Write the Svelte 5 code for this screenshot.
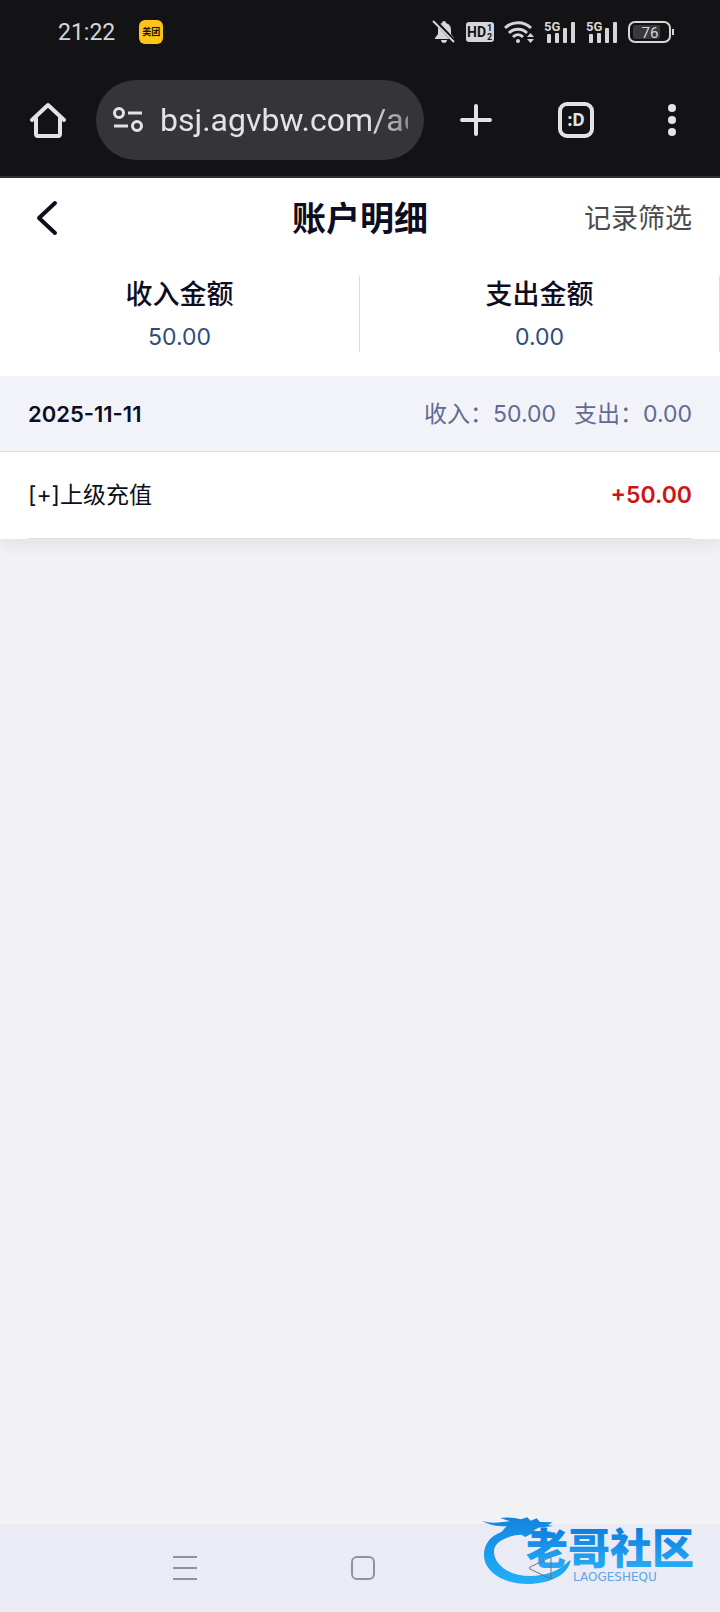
<script lang="ts">
	type Entry = { label: string; amount: string };
	type Day = { date: string; income: string; expense: string; entries: Entry[] };

	let address = $state('bsj.agvbw.com/ac');

	const totals = [
		{ label: '收入金额', value: '50.00' },
		{ label: '支出金额', value: '0.00' }
	];

	const days: Day[] = [
		{
			date: '2025-11-11',
			income: '50.00',
			expense: '0.00',
			entries: [{ label: '[+]上级充值', amount: '+50.00' }]
		}
	];
</script>

{#snippet signal()}
	<svg width="32" height="24" viewBox="0 0 32 24" fill="currentColor">
		<text x="0" y="11" font-size="13" font-weight="700">5G</text>
		<rect x="3" y="14" width="4" height="9" rx="1" />
		<rect x="11" y="13" width="4" height="10" rx="1" />
		<rect x="19" y="8" width="4" height="15" rx="1" />
		<rect x="27" y="2" width="4" height="21" rx="1" />
	</svg>
{/snippet}

<div class="screen">
	<div class="status">
		<time>21:22</time>
		<span class="app-badge">美团</span>
		<div class="indicators">
			<svg width="24" height="24" viewBox="0 0 24 24" fill="currentColor">
				<path d="M12 1a2 2 0 0 1 2 2c3 1 5 3 5 7v4l3 4v1H3v-1l3-4v-4c0-4 1-6 4-7a2 2 0 0 1 2-2zM9 20h6c0 4-6 4-6 0z" />
				<path d="M3 1l20 21" stroke="#131315" stroke-width="4" />
				<path d="M1 1l21 21" stroke="currentColor" stroke-width="2" />
			</svg>
			<svg width="28" height="20" viewBox="0 0 28 20">
				<rect width="28" height="20" rx="3" fill="currentColor" />
				<text x="1" y="15" font-size="14" font-weight="700" fill="#131315">HD</text>
				<text x="21" y="9" font-size="9" font-weight="700" fill="#131315">1</text>
				<text x="21" y="18" font-size="9" font-weight="700" fill="#131315">2</text>
			</svg>
			<svg width="30" height="24" viewBox="0 0 30 24" fill="none" stroke="currentColor" stroke-width="3">
				<path d="M1 8c7-7 19-7 26 0M5 13c5-5 13-5 18 0M9 17c3-3 7-3 10 0" />
				<circle cx="14" cy="21" r="2" fill="currentColor" stroke="none" />
				<path d="M23 17l3.500-4 3.500 4zM23 19l3.500 4 3.500-4z" fill="currentColor" stroke="none" />
			</svg>
			{@render signal()}
			{@render signal()}
			<svg width="46" height="22" viewBox="0 0 46 22">
				<rect x="5" y="4" width="27" height="14" rx="2" fill="#38383a" />
				<rect x="1" y="1" width="41" height="20" rx="6" fill="none" stroke="currentColor" stroke-width="2" />
				<path d="M45 8v6" stroke="currentColor" stroke-width="2" />
				<text x="22" y="17" font-size="15" text-anchor="middle" fill="currentColor">76</text>
			</svg>
		</div>
	</div>

	<nav class="toolbar" aria-label="Browser">
		<button aria-label="Home">
			<svg width="36" height="36" viewBox="0 0 36 36" fill="none" stroke="currentColor" stroke-width="4" stroke-linejoin="round" stroke-linecap="round">
				<path d="M2 18L18 3l16 15M6 16v16q0 2 2 2h20q2 0 2-2V16" />
			</svg>
		</button>
		<label class="address">
			<svg width="30" height="26" viewBox="0 0 30 26" fill="none" stroke="currentColor" stroke-width="3">
				<circle cx="6" cy="6" r="4.500" />
				<path d="M15 6h14M1 19h14" />
				<circle cx="24" cy="19" r="4.500" />
			</svg>
			<input type="text" aria-label="Address" bind:value={address} />
		</label>
		<button aria-label="New tab">
			<svg width="32" height="32" viewBox="0 0 32 32" stroke="currentColor" stroke-width="4" stroke-linecap="round">
				<path d="M2 16h28M16 2v28" />
			</svg>
		</button>
		<button aria-label="Tabs"><span class="tabs">:D</span></button>
		<button aria-label="Menu">
			<svg width="8" height="32" viewBox="0 0 8 32" fill="currentColor">
				<circle cx="4" cy="4" r="4" />
				<circle cx="4" cy="16" r="4" />
				<circle cx="4" cy="28" r="4" />
			</svg>
		</button>
	</nav>

	<header>
		<button class="back" aria-label="返回">
			<svg width="22" height="36" viewBox="0 0 22 36" fill="none" stroke="currentColor" stroke-width="4" stroke-linecap="round" stroke-linejoin="round">
				<path d="M19 3L3 18l16 15" />
			</svg>
		</button>
		<h1>账户明细</h1>
		<button class="filter">记录筛选</button>
	</header>

	<main>
		<dl class="totals">
			{#each totals as total}
				<div>
					<dt>{total.label}</dt>
					<dd>{total.value}</dd>
				</div>
			{/each}
		</dl>

		{#each days as day}
			<section class="day">
				<div class="day-head">
					<h2>{day.date}</h2>
					<p>
						<span>收入：{day.income}</span>
						<span>支出：{day.expense}</span>
					</p>
				</div>
				<ul>
					{#each day.entries as entry}
						<li>
							<span>{entry.label}</span>
							<strong>{entry.amount}</strong>
						</li>
					{/each}
				</ul>
			</section>
		{/each}
	</main>

	<nav class="system" aria-label="System">
		<button aria-label="Recent">
			<svg width="24" height="24" viewBox="0 0 24 24" stroke="currentColor" stroke-width="2">
				<path d="M0 1h24M0 12h24M0 23h24" />
			</svg>
		</button>
		<button aria-label="Home screen">
			<svg width="24" height="24" viewBox="0 0 24 24" fill="none" stroke="currentColor" stroke-width="2">
				<rect x="1" y="1" width="22" height="22" rx="5" />
			</svg>
		</button>
		<button class="return" aria-label="Back">
			<svg width="24" height="24" viewBox="0 0 24 24" fill="none" stroke="currentColor" stroke-width="1">
				<path d="M23 1v22L2 13q-1-1 0-2z" />
			</svg>
		</button>
		<svg class="logo" width="250" height="112" viewBox="0 0 250 112">
			<defs>
				<linearGradient id="body" x1="0" y1="0" x2="0" y2="1">
					<stop offset="0" stop-color="#1284e0" />
					<stop offset="1" stop-color="#22b0fa" />
				</linearGradient>
				<linearGradient id="word" x1="0" y1="0" x2="0" y2="1">
					<stop offset="0.2" stop-color="#0c7de0" />
					<stop offset="1" stop-color="#2cb4fa" />
				</linearGradient>
			</defs>
			<g fill="url(#body)" transform="scale(0.3333)">
				<path
					d="M95 95C60 110 42 130 42 165C42 215 100 252 172 252C240 252 295 225 302 180L296 184C265 215 225 228 180 228C120 228 72 195 72 155C72 130 95 115 135 106L155 104L165 111L185 101L198 108L215 99L240 104L245 95L190 92L205 83L250 78L234 75L248 67L210 66L200 55L182 62L172 52L152 58Q125 50 90 54L120 64L98 66Q60 72 36 62Q70 82 110 78Z"
				/>
			</g>
			<text class="word" x="56" y="64" fill="url(#word)">老哥社区</text>
			<text class="caption" x="103" y="81">LAOGESHEQU</text>
		</svg>
	</nav>
</div>

<style>
	:global(body) {
		margin: 0;
		background: #f2f2f4;
	}

	.screen {
		display: flex;
		flex-direction: column;
		min-height: 100vh;
		font-family: Inter, 'Noto Sans CJK SC', sans-serif;
		color: #0c0d20;
	}

	button {
		display: flex;
		align-items: center;
		justify-content: center;
		padding: 0;
		border: 0;
		background: none;
		color: inherit;
		font: inherit;
	}

	h1,
	h2,
	p,
	dl,
	dd,
	ul {
		margin: 0;
		padding: 0;
	}

	.status {
		display: flex;
		align-items: center;
		height: 64px;
		padding: 0 46px 0 58px;
		background: #131315;
		color: #d6d6d8;
		font-family: Roboto, sans-serif;
	}
	.status time {
		font-size: 23px;
	}
	.app-badge {
		margin-left: 24px;
		width: 24px;
		border-radius: 6px;
		background: #fcc318;
		color: #1c1508;
		font: 700 9px/24px 'Noto Sans CJK SC', sans-serif;
		text-align: center;
	}
	.indicators {
		display: flex;
		align-items: center;
		gap: 10px;
		margin-left: auto;
	}

	.toolbar {
		display: grid;
		grid-template-columns: 96px minmax(0, 1fr) 104px 96px 96px;
		padding: 16px 0;
		border-bottom: 2px solid #303032;
		background: #131315;
		color: #e3e3e5;
	}
	.address {
		display: flex;
		align-items: center;
		gap: 17px;
		height: 80px;
		padding: 0 16px 0 17px;
		box-sizing: border-box;
		border-radius: 40px;
		background: #353537;
	}
	.address svg {
		flex: none;
	}
	.address input {
		flex: 1;
		min-width: 0;
		padding: 0;
		border: 0;
		outline: none;
		background: none;
		color: inherit;
		font: 32px/40px Roboto, sans-serif;
		mask-image: linear-gradient(to right, #000 84%, rgb(0 0 0 / 0.5));
	}
	.tabs {
		width: 28px;
		border: 4px solid;
		border-radius: 9px;
		font: 700 17px/28px 'Noto Sans', sans-serif;
	}

	header {
		display: grid;
		grid-template-columns: 1fr auto 1fr;
		align-items: center;
		height: 80px;
		padding: 0 28px;
		background: #fff;
	}
	.back {
		justify-self: start;
		padding: 0 8px;
	}
	h1 {
		padding-top: 2px;
		font-size: 34px;
		font-weight: 700;
		line-height: 40px;
	}
	.filter {
		justify-self: end;
		padding-top: 2px;
		color: #4a4a4e;
		font-size: 27px;
		line-height: 36px;
	}

	main {
		flex: 1;
	}
	.totals {
		display: grid;
		grid-template-columns: 1fr 1fr;
		padding: 18px 0 24px;
		background: #fff;
		text-align: center;
	}
	.totals div {
		border-right: 1px solid #dcdcdf;
	}
	dt {
		margin-bottom: 8px;
		font-size: 27px;
		font-weight: 500;
		line-height: 38px;
	}
	dd {
		color: #2c4d7c;
		font-size: 23px;
		line-height: 30px;
	}

	.day {
		background: #fff;
		box-shadow: 0 8px 12px rgb(40 40 90 / 0.06);
		font-size: 23px;
		line-height: 30px;
	}
	.day-head {
		display: flex;
		align-items: center;
		justify-content: space-between;
		height: 75px;
		padding: 0 28px;
		border-bottom: 1px solid #dfdfe2;
		background: #f2f3f9;
	}
	h2 {
		font-size: 22px;
		font-weight: 600;
	}
	.day-head p {
		display: flex;
		gap: 18px;
		color: #626a94;
	}
	ul {
		padding: 0 28px;
		list-style: none;
	}
	li {
		display: flex;
		align-items: center;
		justify-content: space-between;
		height: 86px;
		border-bottom: 1px solid #dfdfe4;
	}
	strong {
		color: #cb1518;
		font-weight: 600;
	}

	.system {
		position: relative;
		display: flex;
		justify-content: space-between;
		height: 88px;
		padding: 0 168px 0 173px;
		background: #ebebf5;
		color: #92929c;
	}
	.return {
		position: relative;
		z-index: 1;
		color: #6e7480;
	}
	.logo {
		position: absolute;
		right: 0;
		bottom: 0;
		pointer-events: none;
	}
	.word {
		font: 900 42px 'Noto Sans CJK SC', sans-serif;
	}
	.caption {
		fill: #5aa6e6;
		font: 12px 'DejaVu Sans', sans-serif;
	}
</style>
